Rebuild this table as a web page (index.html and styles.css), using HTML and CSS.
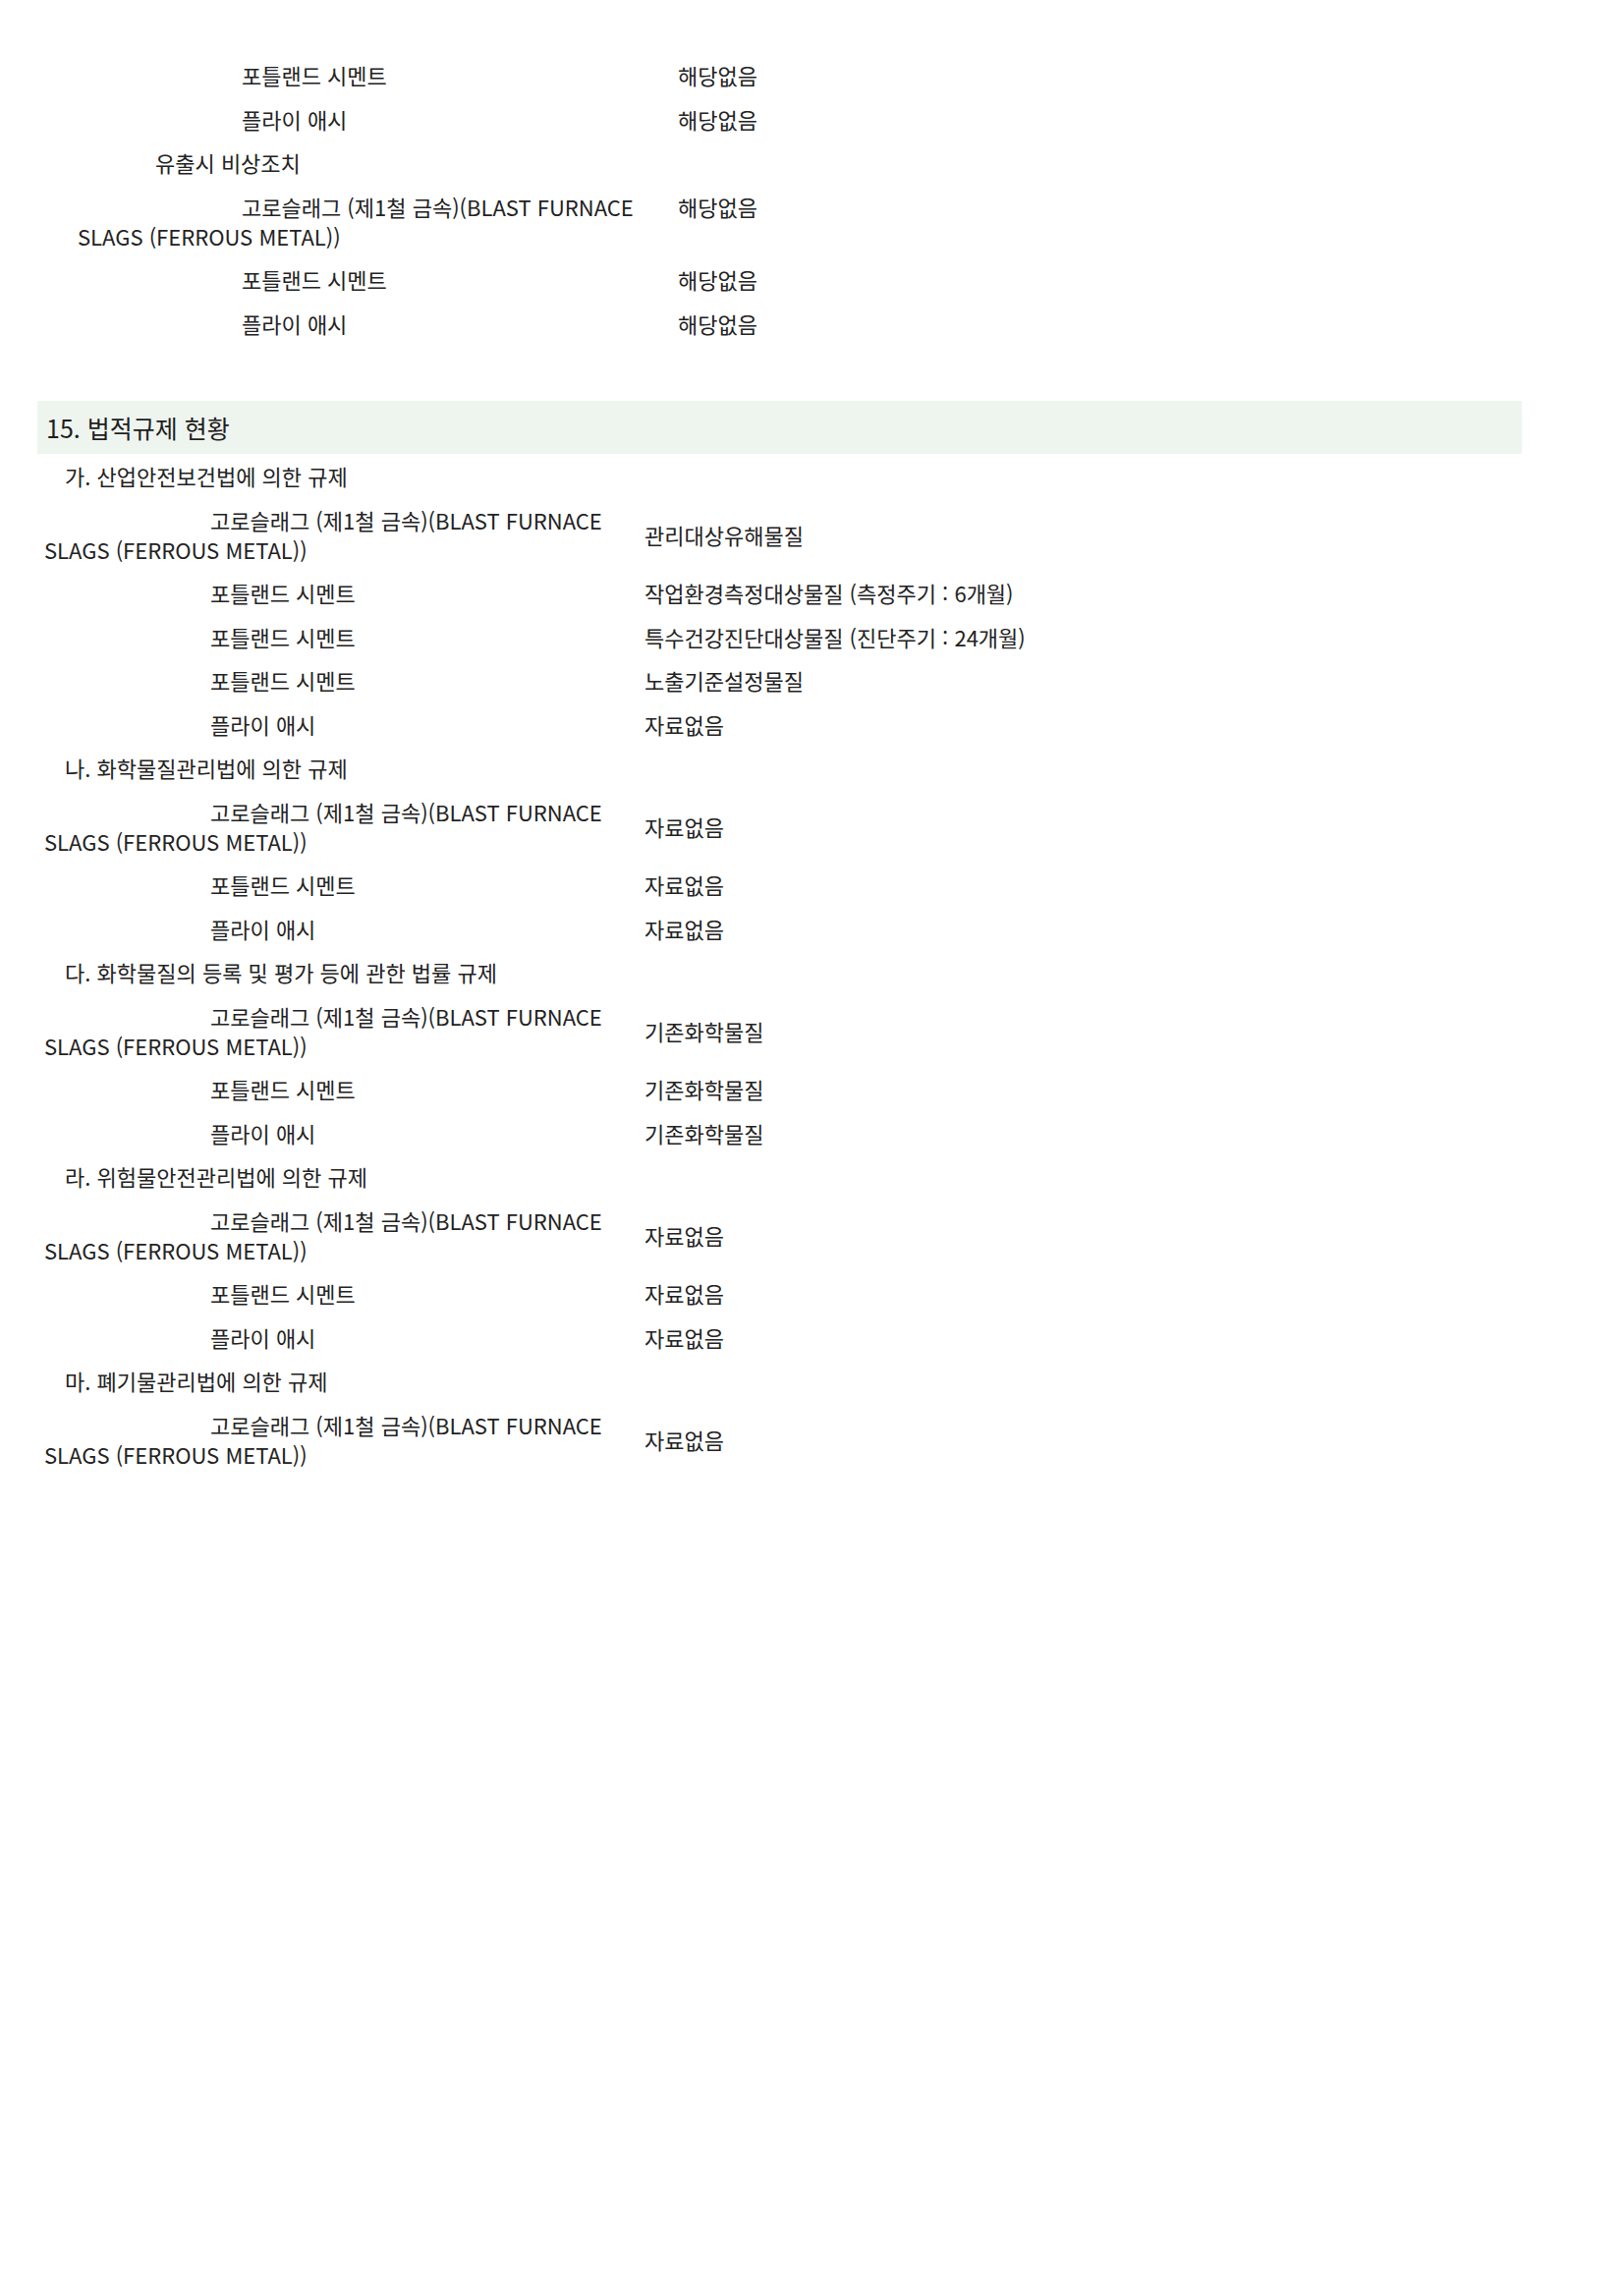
FILE: index.html
```html
<!DOCTYPE html>
<html lang="ko">
<head>
<meta charset="utf-8">
<title>15. 법적규제 현황</title>
<link rel="stylesheet" href="styles.css">
</head>
<body>
<div class="page">
  <table class="grid grid-top">
    <tr><td class="item">포틀랜드 시멘트</td><td class="val">해당없음</td></tr>
    <tr><td class="item">플라이 애시</td><td class="val">해당없음</td></tr>
    <tr><td class="sub" colspan="2">유출시 비상조치</td></tr>
    <tr><td class="item">고로슬래그 (제1철 금속)(BLAST FURNACE<br>SLAGS (FERROUS METAL))</td><td class="val">해당없음</td></tr>
    <tr><td class="item">포틀랜드 시멘트</td><td class="val">해당없음</td></tr>
    <tr><td class="item">플라이 애시</td><td class="val">해당없음</td></tr>
  </table>

  <div class="section-title">15. 법적규제 현황</div>

  <table class="grid grid-reg">
    <tr><td class="sub" colspan="2">가. 산업안전보건법에 의한 규제</td></tr>
    <tr><td class="item">고로슬래그 (제1철 금속)(BLAST FURNACE<br>SLAGS (FERROUS METAL))</td><td class="val">관리대상유해물질</td></tr>
    <tr><td class="item">포틀랜드 시멘트</td><td class="val">작업환경측정대상물질 (측정주기 : 6개월)</td></tr>
    <tr><td class="item">포틀랜드 시멘트</td><td class="val">특수건강진단대상물질 (진단주기 : 24개월)</td></tr>
    <tr><td class="item">포틀랜드 시멘트</td><td class="val">노출기준설정물질</td></tr>
    <tr><td class="item">플라이 애시</td><td class="val">자료없음</td></tr>

    <tr><td class="sub" colspan="2">나. 화학물질관리법에 의한 규제</td></tr>
    <tr><td class="item">고로슬래그 (제1철 금속)(BLAST FURNACE<br>SLAGS (FERROUS METAL))</td><td class="val">자료없음</td></tr>
    <tr><td class="item">포틀랜드 시멘트</td><td class="val">자료없음</td></tr>
    <tr><td class="item">플라이 애시</td><td class="val">자료없음</td></tr>

    <tr><td class="sub" colspan="2">다. 화학물질의 등록 및 평가 등에 관한 법률 규제</td></tr>
    <tr><td class="item">고로슬래그 (제1철 금속)(BLAST FURNACE<br>SLAGS (FERROUS METAL))</td><td class="val">기존화학물질</td></tr>
    <tr><td class="item">포틀랜드 시멘트</td><td class="val">기존화학물질</td></tr>
    <tr><td class="item">플라이 애시</td><td class="val">기존화학물질</td></tr>

    <tr><td class="sub" colspan="2">라. 위험물안전관리법에 의한 규제</td></tr>
    <tr><td class="item">고로슬래그 (제1철 금속)(BLAST FURNACE<br>SLAGS (FERROUS METAL))</td><td class="val">자료없음</td></tr>
    <tr><td class="item">포틀랜드 시멘트</td><td class="val">자료없음</td></tr>
    <tr><td class="item">플라이 애시</td><td class="val">자료없음</td></tr>

    <tr><td class="sub" colspan="2">마. 폐기물관리법에 의한 규제</td></tr>
    <tr><td class="item">고로슬래그 (제1철 금속)(BLAST FURNACE<br>SLAGS (FERROUS METAL))</td><td class="val">자료없음</td></tr>
  </table>
</div>
</body>
</html>
```

FILE: styles.css
```css
html, body {
  margin: 0;
  padding: 0;
  background: #ffffff;
}

body {
  font-family: "Noto Sans CJK KR", "Noto Sans", "Liberation Sans", sans-serif;
  font-size: 22px;
  color: #222222;
}

.page {
  width: 1653px;
  min-height: 2337px;
  padding-top: 54px;
  box-sizing: border-box;
}

.grid {
  border-collapse: collapse;
  border-spacing: 0;
}

.grid td {
  padding: 7.25px 0;
  line-height: 30px;
  white-space: nowrap;
}

.grid-top {
  margin-left: 79px;
}

.grid-top .item {
  width: 611px;
  text-indent: 167px;
}

.grid-top .sub {
  text-indent: 79px;
}

.grid-top .val {
  vertical-align: top;
}

.section-title {
  margin: 57px 0 0 38px;
  width: 1511px;
  height: 54px;
  box-sizing: border-box;
  padding-left: 9px;
  background: #eef5ef;
  font-size: 25px;
  line-height: 54px;
  color: #1e1e1e;
}

.grid-reg {
  margin-left: 45px;
}

.grid-reg .item {
  width: 611px;
  text-indent: 169px;
}

.grid-reg .sub {
  text-indent: 21px;
}

.grid-reg .val {
  vertical-align: middle;
}
```
